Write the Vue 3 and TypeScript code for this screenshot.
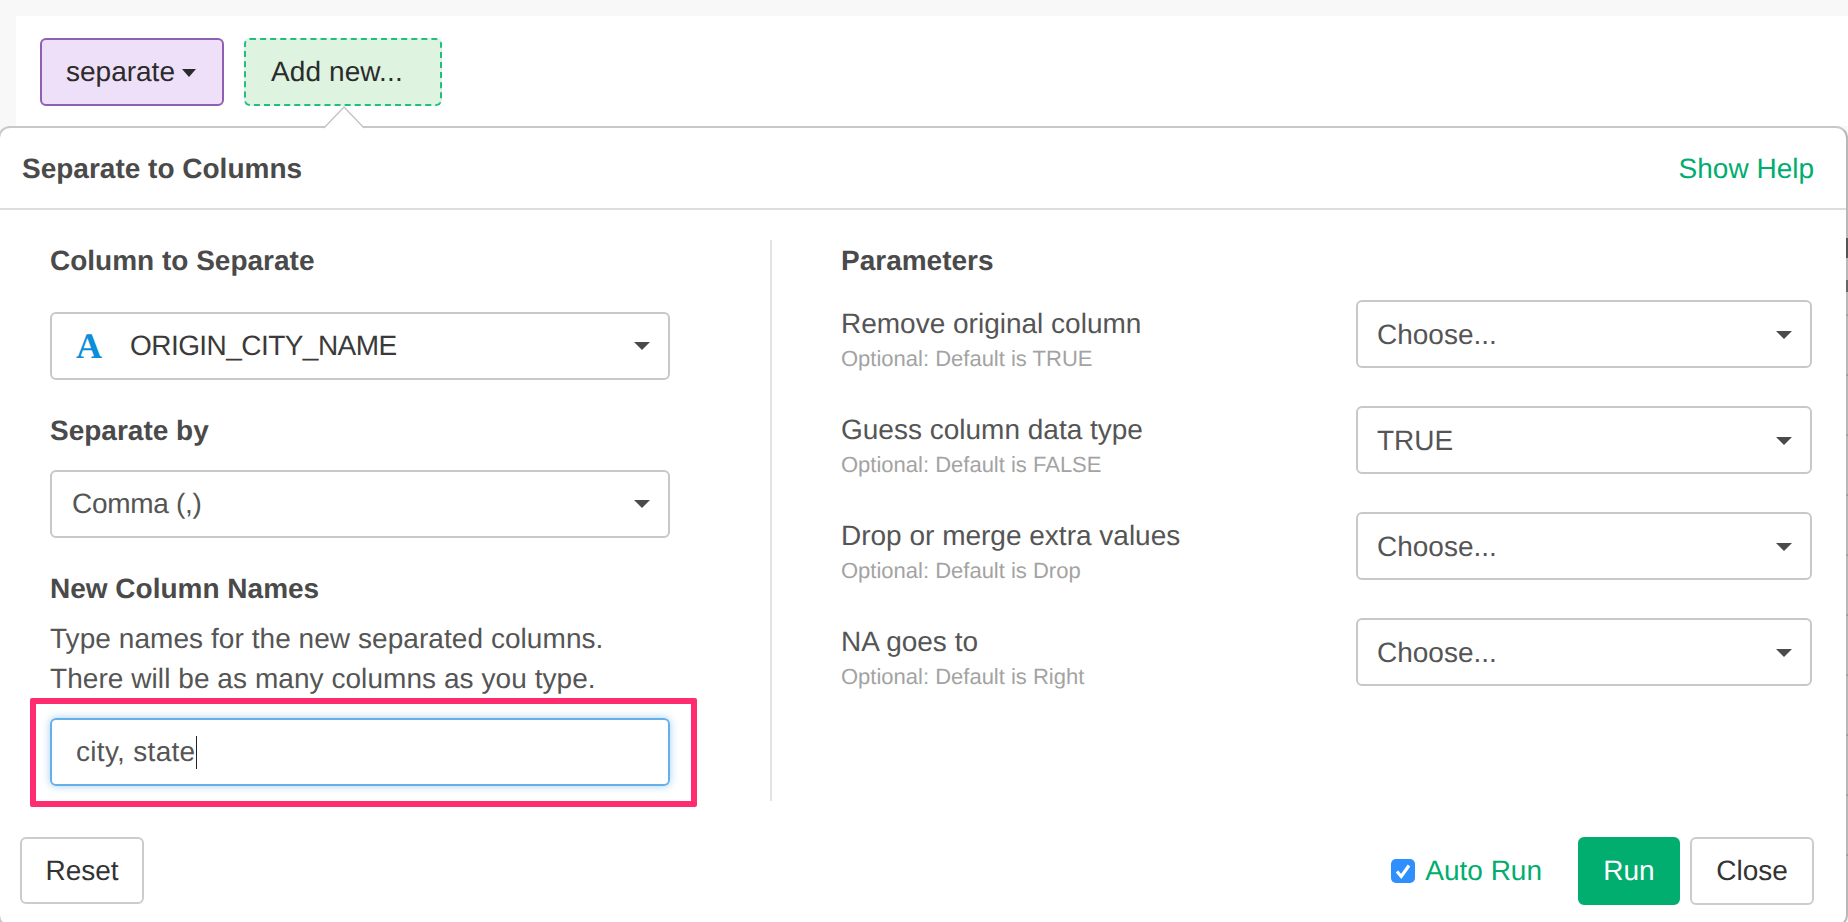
<script setup lang="ts">
interface Param { label: string; hint: string; value: string }
const params: Param[] = [
  { label: 'Remove original column', hint: 'Optional: Default is TRUE', value: 'Choose...' },
  { label: 'Guess column data type', hint: 'Optional: Default is FALSE', value: 'TRUE' },
  { label: 'Drop or merge extra values', hint: 'Optional: Default is Drop', value: 'Choose...' },
  { label: 'NA goes to', hint: 'Optional: Default is Right', value: 'Choose...' },
]
</script>

<template>
  <div class="page">
    <div class="tabs">
      <button class="step">separate<span class="step-caret"></span></button>
      <button class="add">Add new...</button>
    </div>
    <section class="panel">
      <svg class="arrow" width="42" height="23" viewBox="0 0 42 23">
        <path d="M1 22L21 1l20 21z" fill="#fff" />
        <path d="M1 22L21 1l20 21" fill="none" stroke="#c4c4c4" stroke-width="1.4" />
      </svg>
      <span class="edge"></span>
      <header class="head">
        <h2>Separate to Columns</h2>
        <a class="help">Show Help</a>
      </header>
      <div class="body">
        <div class="left">
          <h3 class="top">Column to Separate</h3>
          <div class="select first">
            <span class="type">A</span>
            <span class="dark">ORIGIN_CITY_NAME</span>
            <span class="caret"></span>
          </div>
          <h3 class="gap">Separate by</h3>
          <div class="select first-small">
            <span class="comma">Comma (,)</span>
            <span class="caret"></span>
          </div>
          <h3 class="gap">New Column Names</h3>
          <p class="desc">Type names for the new separated columns.<br />There will be as many columns as you type.</p>
          <div class="field">
            <div class="input"><span class="typed">city, state</span><i class="cursor"></i></div>
            <span class="mark"></span>
          </div>
        </div>
        <div class="right">
          <h3 class="top">Parameters</h3>
          <div v-for="p in params" :key="p.label" class="row">
            <div class="row-label">
              <div class="name">{{ p.label }}</div>
              <div class="hint">{{ p.hint }}</div>
            </div>
            <div class="select param">
              <span>{{ p.value }}</span>
              <span class="caret"></span>
            </div>
          </div>
        </div>
      </div>
      <footer class="foot">
        <button class="btn reset">Reset</button>
        <div class="actions">
          <span class="check">
            <svg width="24" height="24" viewBox="0 0 24 24"><path d="M6 12.5l4.2 5L18 6.5" fill="none" stroke="#fff" stroke-width="3.2" /></svg>
          </span>
          <span class="auto">Auto Run</span>
          <button class="btn run">Run</button>
          <button class="btn close">Close</button>
        </div>
      </footer>
    </section>
  </div>
</template>

<style>
html, body { margin: 0; overflow: hidden; }
</style>

<style scoped>
.page {
  height: 922px;
  overflow: hidden;
  background: #f8f8f8;
  padding-top: 16px;
  box-sizing: border-box;
  font-family: "Liberation Sans", Arial, sans-serif;
  font-size: 28px;
  color: #555;
  text-rendering: geometricPrecision;
}
.tabs {
  margin-left: 16px;
  height: 110px;
  box-sizing: border-box;
  padding: 22px 0 0 24px;
  background: #fff;
  display: flex;
  gap: 20px;
  align-items: flex-start;
}
button { font: inherit; box-sizing: border-box; text-rendering: inherit; }
.step, .add {
  height: 68px;
  border-radius: 6px;
  color: #2b2b2b;
  padding: 0;
}
.step {
  width: 184px;
  background: #eee0f8;
  border: 2px solid #8f5fb3;
  text-align: left;
  padding-left: 24px;
}
.step-caret {
  display: inline-block;
  margin-left: 7px;
  vertical-align: 4px;
  border-top: 8px solid #2b2b2b;
  border-left: 7px solid transparent;
  border-right: 7px solid transparent;
}
.add {
  width: 198px;
  background: #dff3e1;
  border: 2px dashed #1fbf80;
  text-align: left;
  padding-left: 25px;
  letter-spacing: 0.1px;
}
.panel {
  position: relative;
  width: 1850px;
  height: 801px;
  box-sizing: border-box;
  margin-left: -2px;
  background: #fff;
  border: 2px solid #c8c8c8;
  border-right-color: #b8b8b8;
  border-radius: 12px;
}
.arrow {
  position: absolute;
  left: 323px;
  top: -22px;
  display: block;
}
.edge {
  position: absolute;
  right: -2px;
  top: 84px;
  width: 2px;
  height: 700px;
  background:
    linear-gradient(#555, #555) 0 26px / 2px 20px no-repeat,
    linear-gradient(#666, #666) 0 68px / 2px 12px no-repeat,
    repeating-linear-gradient(#b8b8b8 0 58px, #a2a2a2 58px 60px) 0 44px / 2px 100% no-repeat;
}
.head {
  display: flex;
  justify-content: space-between;
  align-items: center;
  height: 82px;
  box-sizing: border-box;
  padding: 1px 32px 0 22px;
  border-bottom: 2px solid #ddd;
}
h2, h3 { margin: 0; font-size: 28px; font-weight: 700; color: #4a4a4a; line-height: 40px; }
.help { color: #00ad6e; }
.body { display: flex; padding-top: 30px; }
.left {
  width: 772px;
  box-sizing: border-box;
  padding: 0 100px 15px 50px;
  border-right: 2px solid #e4e4e4;
}
.right { flex: 1; padding: 0 34px 0 69px; }
.top { padding-top: 1px; }
.select {
  display: flex;
  align-items: center;
  height: 68px;
  box-sizing: border-box;
  padding: 0 18px 0 19px;
  border: 2px solid #c8c8c8;
  border-radius: 6px;
  background: #fff;
  color: #555;
}
.select .caret { margin-left: auto; }
.caret {
  border-top: 8px solid #4a4a4a;
  border-left: 8px solid transparent;
  border-right: 8px solid transparent;
}
.first { margin-top: 31px; padding-left: 24px; }
.first-small { margin-top: 19px; padding-left: 20px; }
.gap { margin-top: 31px; }
.type {
  font-family: "Liberation Serif", serif;
  font-weight: 700;
  font-size: 36px;
  color: #0a8fd8;
  width: 54px;
}
.dark { color: #3a3a3a; letter-spacing: -0.55px; }
.comma { letter-spacing: -0.3px; }
.desc { margin: 10px 0 0; line-height: 40px; color: #555; letter-spacing: 0.06px; }
.field { position: relative; margin-top: 19px; }
.input {
  display: flex;
  align-items: center;
  height: 68px;
  box-sizing: border-box;
  padding-left: 24px;
  border: 2px solid #66afe9;
  border-radius: 6px;
  box-shadow: 0 0 8px rgba(102, 175, 233, 0.6);
  color: #555;
}
.typed { letter-spacing: 0.3px; }
.cursor { width: 1px; height: 33px; background: #222; margin-left: 1px; }
.mark {
  position: absolute;
  left: -20px;
  top: -20px;
  width: 667px;
  height: 109px;
  box-sizing: border-box;
  border: 6px solid #ff2d6f;
  border-radius: 2px;
}
.right h3 { margin-bottom: 19px; }
.row {
  display: flex;
  justify-content: space-between;
  height: 106px;
}
.row-label { padding-top: 4px; }
.name { line-height: 40px; color: #555; }
.hint { font-size: 22px; line-height: 30px; color: #a3a3a3; }
.param { width: 456px; padding-top: 1px; }
.foot {
  display: flex;
  justify-content: space-between;
  align-items: flex-start;
  margin-top: 36px;
  padding: 0 32px 0 20px;
}
.btn {
  height: 68px;
  background: #fff;
  border: 2px solid #ccc;
  border-radius: 6px;
  color: #333;
  padding: 0;
}
.reset { width: 124px; height: 67px; }
.actions { display: flex; align-items: center; }
.check {
  width: 24px;
  height: 24px;
  background: #2f8fff;
  border-radius: 5px;
  margin-right: 10px;
  display: flex;
  margin-left: 1px;
}
.auto { color: #00ad6e; margin-right: 36px; }
.run { width: 102px; background: #02ae6f; border-color: #02ae6f; color: #fff; margin-right: 10px; }
.close { width: 124px; }
</style>
